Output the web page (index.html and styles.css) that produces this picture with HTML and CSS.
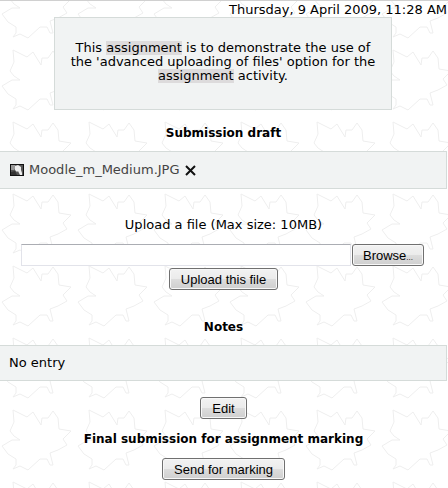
FILE: index.html
```html
<!DOCTYPE html>
<html lang="en">
<head>
    <meta charset="UTF-8">
    <meta name="viewport" content="width=device-width, initial-scale=1.0">
    <title>Assignment</title>
    <link rel="stylesheet" href="styles.css">
</head>
<body>
    <div class="page">
        <div class="date">Thursday, 9 April 2009, 11:28 AM</div>

        <div class="intro">
            This <span class="highlight">assignment</span> is to demonstrate the use of the 'advanced uploading of files' option for the <span class="highlight">assignment</span> activity.
        </div>

        <h2>Submission draft</h2>
        <div class="box files">
            <svg class="file-icon" width="14" height="12" viewBox="0 0 14 12" aria-hidden="true">
                <rect width="14" height="12" fill="#111"/>
                <rect x="1" y="1" width="12" height="10" fill="#555"/>
                <path d="M1 1h4l1 3-2 2-3 0z" fill="#999"/>
                <path d="M5 2l3-1 3 2v3l1 3v2h-2l-2-4-1 1-2-2z" fill="#eee"/>
                <path d="M1 8l4-1 2 4H1z" fill="#333"/>
            </svg>
            <a href="#">Moodle_m_Medium.JPG</a>
            <button class="delete" type="button" aria-label="Delete">
                <svg width="11" height="11" viewBox="0 0 11 11"><path d="M1 1l9 9M10 1l-9 9" stroke="#111" stroke-width="2"/></svg>
            </button>
        </div>

        <form class="upload">
            <label for="newfile">Upload a file (Max size: 10MB)</label>
            <div class="file-row">
                <input type="text" id="newfile" name="newfile">
                <button type="button">Browse<span class="dots">...</span></button>
            </div>
            <button type="submit">Upload this file</button>
        </form>

        <h2>Notes</h2>
        <div class="box notes">No entry</div>
        <div class="action">
            <button type="button">Edit</button>
        </div>

        <h2 class="final">Final submission for assignment marking</h2>
        <div class="action">
            <button type="button">Send for marking</button>
        </div>
    </div>
</body>
</html>
```
FILE: styles.css
```css
body {
    margin: 0;
    font-family: "DejaVu Sans", Verdana, sans-serif;
    font-size: 13px;
    line-height: 14px;
    color: #000;
    border-top: 1px solid #d0d0d0;
    background-color: #fff;
    background-image: url("data:image/svg+xml,%3Csvg xmlns='http://www.w3.org/2000/svg' width='76' height='72'%3E%3Cpath d='M13 1L14 13L10 22L14 27L20 31L12 31L2 37L8 45L16 50L16 56L13 60L20 57L28 61L40 50L47 50L50 56L53 56L50 44L58 41L67 36L63 30L71 22L59 20L58 9L53 2L48 9L42 9L41 16L33 3L27 8Z' fill='none' stroke='%23eeeeee'/%3E%3C/svg%3E");
    background-position: 0 -23px;
}
.page {
    margin-right: 1px;
}
.date {
    text-align: right;
    padding-top: 2px;
}
.intro {
    margin: 0 55px 0 54px;
    padding: 23px 12px 26px;
    border: 1px solid #d5dbd9;
    background-color: #f1f3f3;
    text-align: center;
}
.highlight {
    display: inline-block;
    background-color: #dddbdc;
}
h2 {
    margin: 16px 0 11px;
    font-size: 12px;
    line-height: 14px;
    text-align: center;
}
.box {
    padding: 11px 10px;
    border: 1px solid #d5dbd9;
    border-left: none;
    background-color: #f1f3f3;
}
.files {
    display: flex;
    align-items: center;
    gap: 5px;
}
.files a {
    color: #444;
    text-decoration: none;
}
.notes {
    padding: 10px 9px;
}
button {
    height: 22px;
    padding: 0 11px;
    border: 1px solid #707070;
    border-radius: 3px;
    background: linear-gradient(#f2f2f2 0%, #ebebeb 50%, #dddddd 50%, #cfcfcf 100%);
    box-shadow: inset 0 0 0 1px #f8f8f8;
    font-family: "Liberation Sans", Arial, sans-serif;
    font-size: 13px;
    color: #000;
}
.delete {
    display: flex;
    height: auto;
    padding: 0;
    border: none;
    background: none;
    box-shadow: none;
}
.upload {
    display: flex;
    flex-direction: column;
    align-items: center;
    gap: 2px;
    padding: 29px 0 14px;
}
.upload label {
    margin-bottom: 10px;
}
.file-row {
    display: flex;
    box-sizing: border-box;
    width: 100%;
    gap: 1px;
    padding: 0 23px 0 21px;
}
.file-row input {
    flex: 1;
    min-width: 0;
    box-sizing: border-box;
    height: 22px;
    border: 1px solid #e2e3ea;
    border-top-color: #abadb3;
    background-color: #fff;
}
.file-row button {
    padding: 0 10px;
}
.dots {
    font-size: 8px;
}
.action {
    text-align: center;
}
.notes + .action {
    padding-top: 16px;
}
.final {
    margin: 13px 0 12px;
}
```
